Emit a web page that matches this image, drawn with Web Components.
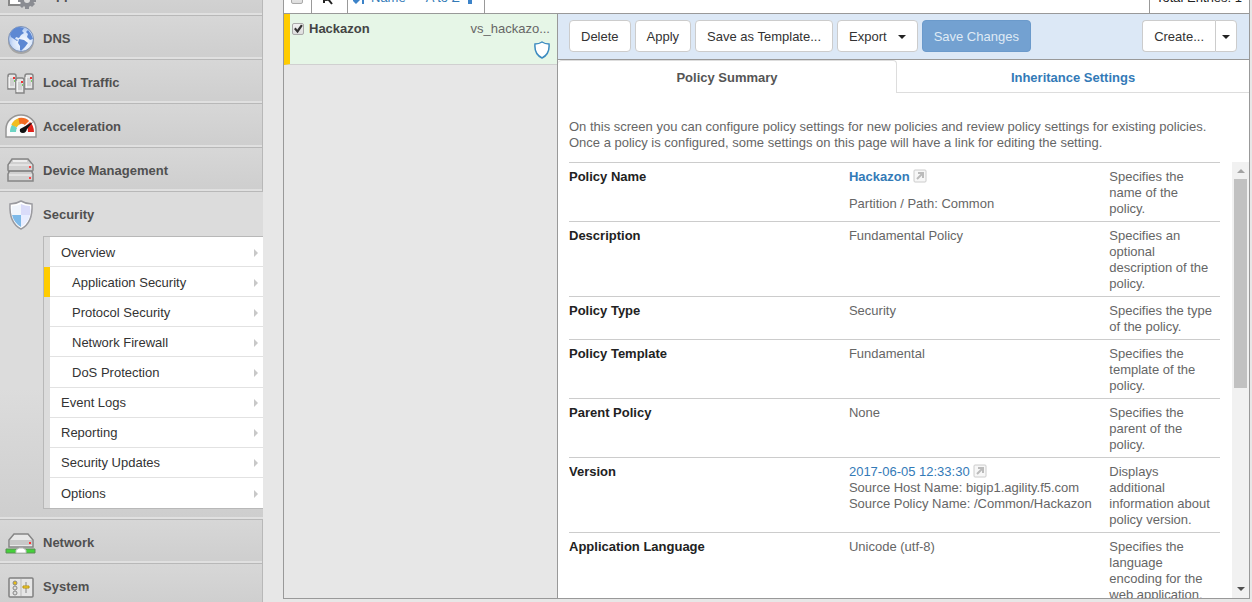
<!DOCTYPE html>
<html lang="en">
<head>
<meta charset="utf-8">
<title>Policy Summary</title>
<style>
html,body{margin:0;height:100%;overflow:hidden;background:#e7e7e7}
body{font:13px/16px "Liberation Sans",Arial,sans-serif;color:#666}
</style>
</head>
<body>
<app-page>
  <side-nav slot="nav">
    <nav-row><svg slot="icon" width="36" height="36" viewBox="0 0 36 36"><path d="M6 4h15v24H6z" fill="#fff" stroke="#888" stroke-width="2"/><g fill="#8a8c92"><circle cx="24" cy="23" r="7"/><path d="M22 14h4v18h-4zM15 21h18v4H15zM16 17l3-3 13 13-3 3zM16 28l3 3 13-13-3-3z"/></g><circle cx="24" cy="23" r="3" fill="#ddd"/></svg>iApps</nav-row>
    <nav-row><svg slot="icon" width="36" height="36" viewBox="0 0 36 36"><defs><radialGradient id="g" cx=".6" cy=".65" r=".7"><stop offset="0" stop-color="#fff"/><stop offset=".6" stop-color="#d3e2fa"/><stop offset="1" stop-color="#8fb1ea"/></radialGradient></defs><circle cx="18" cy="20" r="13" fill="#0003"/><circle cx="18" cy="18" r="12.500" fill="url(#g)" stroke="#7f93b5"/><path d="M7 13q3-6 9-7l5 1-2 3 2 2-3 2-2 3-3-1-1 2 3 1-1 1-6-4zM16 18l5 1 4 3-3 4-4 4-1-1v-4l-2-3zM25 9q4 4 5 9l-3 1-3-3 1-3-2-2z" fill="#5d88d3"/></svg>DNS</nav-row>
    <nav-row><svg slot="icon" width="36" height="36" viewBox="0 0 36 36"><defs><g id="t"><path d="M1 16V3q0-2 2-2h4q2 0 2 2v13z" fill="#e6e6e6" stroke="#858585" stroke-width="1.500"/><path d="M2 4v11" stroke="#fff"/><path d="M3 6h4M3 8h4M3 10h4M3 12h4" stroke="#bbb"/><path d="M6 4h2v2H6z" fill="#e33"/><path d="M7 7h1v2H7z" fill="#7c6"/></g></defs><use href="#t" x="4" y="8"/><use href="#t" x="21" y="8"/><use href="#t" x="12" y="12"/></svg>Local Traffic</nav-row>
    <nav-row><svg slot="icon" width="36" height="36" viewBox="0 0 36 36"><path d="M3 28V20a15 14 0 0 1 30 0v8z" fill="#fafafa" stroke="#959595" stroke-width="1.500"/><g fill="none" stroke-width="6"><path d="M10 23q0-4 2-6" stroke="#6dd5c4"/><path d="M11 17q2-4 6-5" stroke="#f1bd20"/><path d="M16 12q5-1 8 2" stroke="#f36a20"/><path d="M25 15q3 3 3 8" stroke="#df211a"/></g><path d="M30 13 17 20q-1 4 3 4 3 0 4-4z" fill="#111"/></svg>Acceleration</nav-row>
    <nav-row><svg slot="icon" width="36" height="36" viewBox="0 0 36 36"><g stroke="#858585" stroke-width="1.500" fill="#d0d0d0"><path d="M5 12l4-6h16l5 6v5l-1 2 1 2v7H5v-7l1-2-1-2z"/><path d="M6 18h23" stroke="#777"/></g><path d="M10 8h14" stroke="#eee" stroke-width="2"/><path d="M6 12h23M6 22h23" stroke="#f5f5f5"/><path d="M26 13h2v2h-2zM26 24h2v2h-2z" fill="#f44"/></svg>Device Management</nav-row>
    <nav-section>
      <svg slot="icon" width="36" height="36" viewBox="0 0 36 36"><path d="M18 4q-5 3-11 3-1 19 11 25 12-6 11-25-6 0-11-3z" fill="#fff" stroke="#9a9a9f" stroke-width="1.500"/><path d="M18 7v11h9q1-4 0-9-5 0-9-2z" fill="#dadcf9"/><path d="M9 18h9v12q-7-4-9-12z" fill="#7db9e8"/><path d="M9 9q5 0 9-2v11H9q-1-5 0-9z" fill="#f1f5fc"/><path d="M18 18h9q-2 8-9 12z" fill="#e8edff"/></svg>
      <span slot="title">Security</span>
      <sub-item>Overview</sub-item>
      <sub-item nested current>Application Security</sub-item>
      <sub-item nested>Protocol Security</sub-item>
      <sub-item nested>Network Firewall</sub-item>
      <sub-item nested>DoS Protection</sub-item>
      <sub-item>Event Logs</sub-item>
      <sub-item>Reporting</sub-item>
      <sub-item>Security Updates</sub-item>
      <sub-item>Options</sub-item>
    </nav-section>
    <nav-row><svg slot="icon" width="36" height="36" viewBox="0 0 36 36"><path d="M6 15l5-6h14l5 6v7H6z" fill="#e8e8e8" stroke="#858585" stroke-width="1.500"/><path d="M7 15h22v5H7z" fill="#c8c8c8"/><path d="M26 17h2v2h-2z" fill="#f33"/><path d="M3 24h29v4H3z" fill="#45d03a" stroke="#5a8d55"/><path d="M13 28v-3l3-2h4l3 2v3z" fill="#fff" stroke="#bbb"/></svg>Network</nav-row>
    <nav-row><svg slot="icon" width="36" height="36" viewBox="0 0 36 36"><rect x="6" y="9" width="24" height="19" rx="1" fill="#e6e6e6" stroke="#808080" stroke-width="1.500"/><path d="M18 10v17" stroke="#bbb"/><g stroke="#888"><circle cx="12" cy="14" r="2" fill="#e7bd19"/><circle cx="12" cy="19" r="2" fill="#ddd"/><circle cx="12" cy="24" r="2" fill="#ddd"/><path d="M23 13v11"/><path d="M20 17h6v2h-6z" fill="#fd3" stroke="#b79010"/></g></svg>System</nav-row>
  </side-nav>
  <policy-panel></policy-panel>
</app-page>

<script>
function define(name, html) {
  const t = document.createElement('template');
  t.innerHTML = html;
  customElements.define(name, class extends HTMLElement {
    constructor() {
      super();
      this.attachShadow({ mode: 'open' }).append(t.content.cloneNode(true));
    }
  });
}

/* The page is scrolled down slightly, so its first rows are cut by the window. */
define('app-page', `<style>
:host{display:grid;grid-template-columns:263px minmax(0,1fr);grid-template-rows:100%;column-gap:20px;height:100vh;overflow:hidden}
main{display:flex;min-width:0;min-height:0;padding:0 2px 3px 0;margin-top:-18px}
main ::slotted(*){flex:1;min-width:0}
nav{margin-top:-29px}
</style><nav><slot name="nav"></slot></nav><main><slot></slot></main>`);

define('side-nav', `<style>:host{display:block}</style><slot></slot>`);

define('nav-row', `<style>
:host{display:block}
a{display:flex;align-items:center;gap:4px;height:44px;box-sizing:border-box;padding:2px 0 0 3px;border:solid #b8b8b8;border-width:1px 1px 0 0;background:linear-gradient(#d7d7d7,#cecece);box-shadow:inset 0 -2px #e0e0e0;color:#505050;font-weight:bold;text-decoration:none}
::slotted(svg){display:block}
</style><a href="#"><slot name="icon"></slot><span><slot></slot></span></a>`);

define('nav-section', `<style>
:host{display:block;padding-bottom:10px;border-top:1px solid #b8b8b8;background:linear-gradient(#dcdcdc 60%,#cecece);box-shadow:inset 0 -2px #e0e0e0}
a{display:flex;align-items:center;gap:4px;height:44px;box-sizing:border-box;padding:1px 0 0 3px;color:#505050;font-weight:bold;text-decoration:none}
div{display:flex;flex-direction:column;height:271px;margin-left:43px;border:solid #b8b8b8;border-width:1px 0 1px 1px}
</style><a href="#"><slot name="icon"></slot><slot name="title"></slot></a><div><slot></slot></div>`);

define('sub-item', `<style>
:host{display:flex;flex:1;border-left:6px solid #dcdcdc;background:#fff}
:host([current]){border-left-color:#fc0}
a{flex:1;display:flex;align-items:center;justify-content:space-between;padding:2px 5px 0 11px;border-bottom:1px solid #e2e2e2;color:#333;text-decoration:none}
:host([nested]) a{padding-left:22px}
:host(:last-child) a{border-bottom:0}
i{border:solid transparent;border-width:4px 0 4px 4px;border-left-color:#c8c8c8}
</style><a href="#"><slot></slot><i></i></a>`);

define('tick-box', `<style>
:host{display:block;line-height:0}
input{appearance:none;display:block;width:12px;height:12px;margin:0;box-sizing:border-box;border:1px solid #aaa;border-radius:2px;background:linear-gradient(#f2f2f2,#ddd)}
:host([checked]) input::before{content:"";display:block;width:10px;height:10px;background:#333;clip-path:polygon(10% 50%,28% 36%,42% 58%,80% 4%,98% 18%,46% 92%)}
</style><input type="checkbox" aria-label="Select policy">`);

define('push-button', `<style>
:host{display:block}
button{display:flex;align-items:center;gap:11px;height:32px;box-sizing:border-box;padding:2px 11px 0;border:1px solid #ccc;border-radius:4px;background:#fff;color:#333;font:inherit;white-space:nowrap}
:host([primary]) button{background:#73a1d1;border-color:#6b9acb;color:#dfeaf5}
:host([start]) button{border-radius:4px 0 0 4px;border-right:0}
:host([end]) button{border-radius:0 4px 4px 0;padding:2px 6px 0}
i{display:none;border:solid transparent;border-width:4px 4px 0;border-top-color:#222}
:host([menu]) i{display:block}
:host([end]) slot{display:none}
</style><button type="button"><slot></slot><i></i></button>`);

define('open-icon', `<style>:host{display:inline-block;vertical-align:top;margin-left:3px}svg{display:block}</style>
<svg width="14" height="14" viewBox="0 0 14 14"><rect x="1" y="1" width="12" height="12" rx="1" fill="#f7f7f7" stroke="#ccc"/><path d="M4 10l5-5M5 4h5v5" fill="none" stroke="#bbb" stroke-width="2"/></svg>`);

define('scroll-track', `<style>
:host{display:flex;flex-direction:column;align-items:center;width:17px;background:#f1f1f1}
i{margin:7px 0 6px;border:solid transparent;border-width:0 4px 4px;border-bottom-color:#a3a3a3}
b{width:13px;height:209px;background:#c1c1c1}
i.down{margin:auto 0 7px;border-width:4px 4px 0;border-top-color:#505050}
</style><i></i><b></b><i class="down"></i>`);

define('policy-panel', `<style>
:host{display:flex;flex-direction:column;border:solid #999;border-width:0 1px 1px;background:#fff}
a{color:#337ab7;text-decoration:none}
header{display:flex;height:31px;align-items:stretch;border-bottom:1px solid #999;color:#337ab7}
header>*{display:flex;align-items:center;border-right:1px solid #999;box-sizing:border-box}
.c{width:28px;padding-left:7px}.s{width:36px;padding-left:9px}
.n{width:137px;padding-left:5px;gap:6px}.n span{margin-right:14px}
.t{margin-left:auto;border:0;border-left:1px solid #999;width:100px;padding-left:6px;color:#222;white-space:nowrap}
.body{flex:1;min-height:0;display:grid;grid-template-columns:274px minmax(0,1fr);grid-template-rows:100%}
aside{background:#e7e7e7;border-right:1px solid #999}
.item{display:grid;grid-template-columns:auto 1fr auto;align-items:center;column-gap:5px;height:51px;box-sizing:border-box;padding:7px 7px 5px 2px;border-left:6px solid #fc0;background:#e6f6e7;border-bottom:1px solid #d0d0d0;align-content:space-between}
.item strong{color:#444}
.item svg{grid-column:3;justify-self:end;display:block}
section{display:flex;flex-direction:column;min-width:0;min-height:0}
.bar{display:flex;gap:4px;height:45px;padding:6px 12px 0 11px;box-sizing:border-box;background:#dce8f6}
.split{display:flex;margin-left:auto}
.tabs{display:grid;grid-template-columns:339px 1fr;border-top:1px solid #999;font-weight:bold;text-align:center}
.tabs a{padding:10px 0 6px;border-bottom:1px solid #ddd}
.tabs a.on{color:#555;border:1px solid #ddd;border-width:1px 1px 0 0;border-radius:4px 4px 0 0;padding:9px 0 7px}
p{margin:26px 11px 11px}
.scroll{flex:1;min-height:0;display:flex;justify-content:space-between;padding-left:11px}
.view{flex:1;margin-right:12px;overflow:hidden}
table{width:100%;table-layout:fixed;border-collapse:separate;border-spacing:0}
th,td{border-top:1px solid #ccc;padding:6px 0 4px;text-align:left;vertical-align:top}
th{width:43%;color:#222}
td{width:40%}
td+td{width:17%;padding-right:7px;box-sizing:border-box}
td div{margin-top:11px}
.v{white-space:nowrap}
</style>
<header>
 <div class="c"><tick-box></tick-box></div>
 <div class="s"><svg width="14" height="14" viewBox="0 0 14 14" fill="none" stroke="#222" stroke-width="2"><circle cx="5" cy="6" r="3"/><path d="M7 8l4 5M3 9v3"/></svg></div>
 <div class="n"><svg width="12" height="14" viewBox="0 0 12 14" fill="#3c83c9"><path d="M2 0h2v9h3l-4 4-4-4h2zM9 1h2v12H9z"/></svg><span>Name</span>A to Z<svg width="8" height="14" viewBox="0 0 8 14"><path d="M2 5H0l4-5 4 5H6v8H2z" fill="#3c83c9"/></svg></div>
 <div class="t">Total Entries: 1</div>
</header>
<div class="body">
 <aside><div class="item"><tick-box checked></tick-box><strong>Hackazon</strong><span>vs_hackazo...</span><svg width="16" height="18" viewBox="0 0 16 18"><path d="M8 1Q5 3 1 3q-1 10 7 14 8-4 7-14-4 0-7-2z" fill="#fff" stroke="#3c8bc0" stroke-width="1.500"/></svg></div></aside>
 <section>
  <div class="bar"><push-button>Delete</push-button><push-button>Apply</push-button><push-button>Save as Template...</push-button><push-button menu>Export</push-button><push-button primary>Save Changes</push-button><div class="split"><push-button start>Create...</push-button><push-button end menu></push-button></div></div>
  <div class="tabs"><a class="on" href="#">Policy Summary</a><a href="#">Inheritance Settings</a></div>
  <p>On this screen you can configure policy settings for new policies and review policy settings for existing policies.<br>Once a policy is configured, some settings on this page will have a link for editing the setting.</p>
  <div class="scroll"><div class="view"><table>
   <tr><th scope="row">Policy Name</th><td><a href="#"><b>Hackazon</b></a><open-icon></open-icon><div>Partition / Path: Common</div></td><td>Specifies the name of the policy.</td></tr>
   <tr><th scope="row">Description</th><td>Fundamental Policy</td><td>Specifies an optional description of the policy.</td></tr>
   <tr><th scope="row">Policy Type</th><td>Security</td><td>Specifies the type of the policy.</td></tr>
   <tr><th scope="row">Policy Template</th><td>Fundamental</td><td>Specifies the template of the policy.</td></tr>
   <tr><th scope="row">Parent Policy</th><td>None</td><td>Specifies the parent of the policy.</td></tr>
   <tr><th scope="row">Version</th><td class="v"><a href="#">2017-06-05 12:33:30</a><open-icon></open-icon><br>Source Host Name: bigip1.agility.f5.com<br>Source Policy Name: /Common/Hackazon</td><td>Displays additional information about policy version.</td></tr>
   <tr><th scope="row">Application Language</th><td>Unicode (utf-8)</td><td>Specifies the language encoding for the web application.</td></tr>
  </table></div><scroll-track></scroll-track></div>
 </section>
</div>`);

document.querySelector('policy-panel').shadowRoot
  .querySelector('tick-box[checked]').shadowRoot.querySelector('input').checked = true;
</script>
</body>
</html>
